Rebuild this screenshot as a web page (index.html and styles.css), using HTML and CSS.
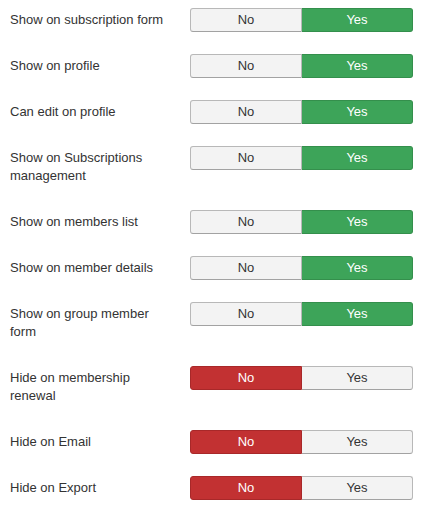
FILE: index.html
```html
<!DOCTYPE html>
<html lang="en">
<head>
    <meta charset="UTF-8">
    <title>Field settings</title>
    <link rel="stylesheet" href="styles.css">
</head>
<body>
    <div class="form">
        <div class="control-group">
            <div class="control-label">Show on subscription form</div>
            <div class="btn-group"><span class="btn">No</span><span class="btn yes active">Yes</span></div>
        </div>
        <div class="control-group">
            <div class="control-label">Show on profile</div>
            <div class="btn-group"><span class="btn">No</span><span class="btn yes active">Yes</span></div>
        </div>
        <div class="control-group">
            <div class="control-label">Can edit on profile</div>
            <div class="btn-group"><span class="btn">No</span><span class="btn yes active">Yes</span></div>
        </div>
        <div class="control-group">
            <div class="control-label">Show on Subscriptions management</div>
            <div class="btn-group"><span class="btn">No</span><span class="btn yes active">Yes</span></div>
        </div>
        <div class="control-group">
            <div class="control-label">Show on members list</div>
            <div class="btn-group"><span class="btn">No</span><span class="btn yes active">Yes</span></div>
        </div>
        <div class="control-group">
            <div class="control-label">Show on member details</div>
            <div class="btn-group"><span class="btn">No</span><span class="btn yes active">Yes</span></div>
        </div>
        <div class="control-group">
            <div class="control-label">Show on group member form</div>
            <div class="btn-group"><span class="btn">No</span><span class="btn yes active">Yes</span></div>
        </div>
        <div class="control-group">
            <div class="control-label">Hide on membership renewal</div>
            <div class="btn-group"><span class="btn no active">No</span><span class="btn">Yes</span></div>
        </div>
        <div class="control-group">
            <div class="control-label">Hide on Email</div>
            <div class="btn-group"><span class="btn no active">No</span><span class="btn">Yes</span></div>
        </div>
        <div class="control-group">
            <div class="control-label">Hide on Export</div>
            <div class="btn-group"><span class="btn no active">No</span><span class="btn">Yes</span></div>
        </div>
    </div>
</body>
</html>
```

FILE: styles.css
```css
body {
    font-family: "Liberation Sans", Arial, sans-serif;
    font-size: 13px;
    line-height: 18px;
    color: #333;
    background-color: #fff;
    margin: 0;
    padding: 8px 0 0 10px;
}
.control-group {
    display: flex;
    align-items: flex-start;
    margin-bottom: 22px;
}
.control-label {
    width: 160px;
    padding-top: 3px;
    padding-bottom: 3px;
    margin-right: 20px;
}
.btn-group {
    display: flex;
    width: 223px;
}
.btn {
    flex: 1;
    text-align: center;
    padding: 2px 0;
    background-color: #f3f3f3;
    border: 1px solid #b8b8b8;
    border-bottom-color: #a2a2a2;
    color: #333;
}
.btn:first-child {
    border-radius: 3px 0 0 3px;
}
.btn:last-child {
    border-radius: 0 3px 3px 0;
    border-left: 0;
}
.btn.active {
    color: #fff;
}
.btn.yes.active {
    background-color: #3da459;
    border-color: #348f4c;
}
.btn.no.active {
    background-color: #c23132;
    border-color: #a82829;
}
```
